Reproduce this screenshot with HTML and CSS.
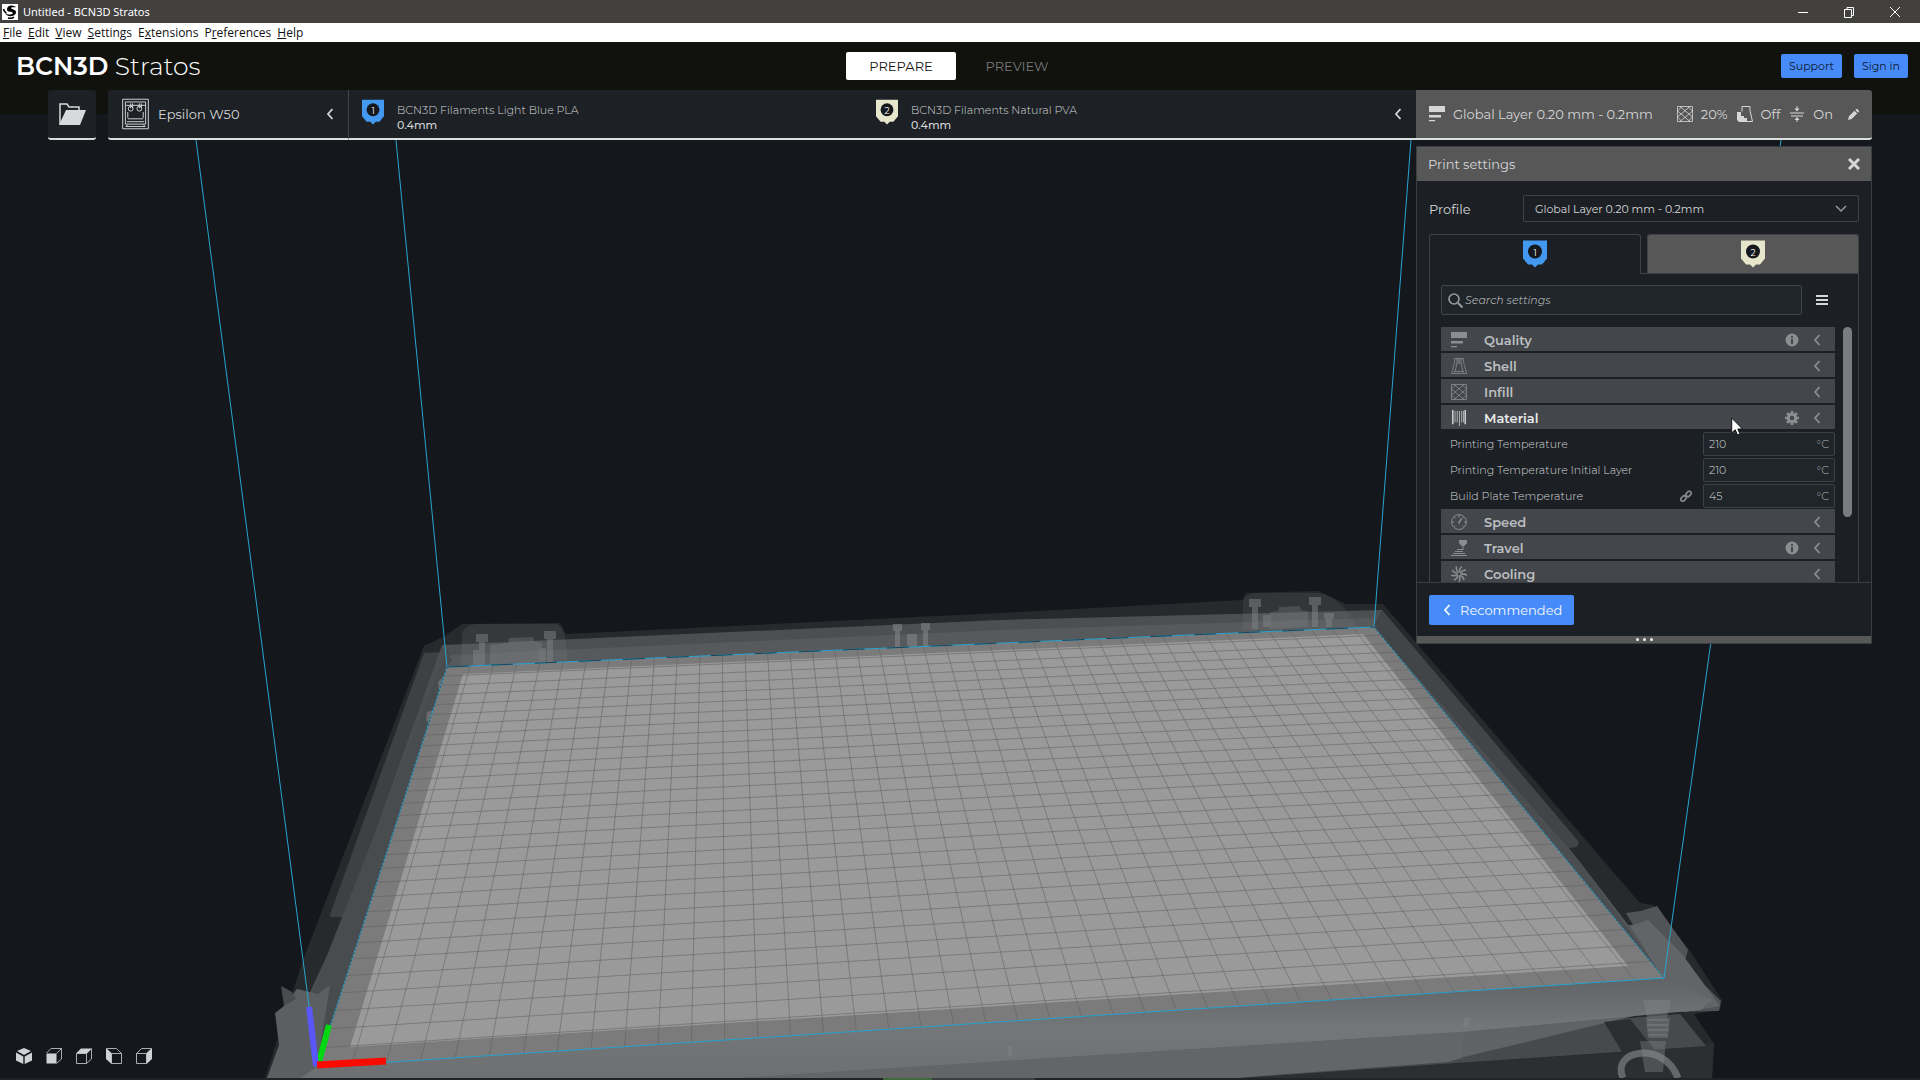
FILE: index.html
```html
<!DOCTYPE html>
<html lang="en">
<head>
  <meta charset="UTF-8">
  <title>Untitled - BCN3D Stratos</title>
  <link rel="stylesheet" href="styles.css">
</head>
<body>
  <!-- shared icons -->
  <svg class="defs" aria-hidden="true">
    <symbol id="chevron" viewBox="0 0 8 12"><path d="M6.5 1 2 6l4.500 5" fill="none" stroke="currentColor" stroke-width="1.800"/></symbol>
    <symbol id="layers" viewBox="0 0 16 16"><path d="M0 0h16v6H0zM0 9h12v2.500H0zM0 14h6v1.200H0z" fill="currentColor"/></symbol>
    <symbol id="infill" viewBox="0 0 16 16"><path d="M.5.5h15v15H.5zM5 .5l-4.500 4.500M11 .5l4.500 4.500M.5 11 5 15.500M15.500 11 11 15.500M3 .5l12.500 10.500M13 .5.5 11M.5 5 13 15.500M15.500 5 3 15.500" fill="none" stroke="currentColor" stroke-width=".8"/></symbol>
    <symbol id="shell" viewBox="0 0 16 16"><path d="M3.500.5h9q-.5 4 1.200 8l2 7H.5l2-7q1.700-4 1-8zM6 .5q.3 5-1 9l-1.500 5M10 .5q-.3 5 1 9l1.500 5M7.200 1v5M8.800 1v5M3.500 13.500h9" fill="none" stroke="currentColor" stroke-width=".8"/></symbol>
    <symbol id="material" viewBox="0 0 16 18"><path d="M1 0v16M15 0v16" stroke="currentColor" stroke-width="1.800"/><path d="M3.500 1v13M6 1v13M8.500 1v17M11 1v13M13 1v13" stroke="currentColor" stroke-width=".9"/></symbol>
    <symbol id="speed" viewBox="0 0 16 16"><g fill="none" stroke="currentColor"><circle cx="8" cy="8" r="7.400" stroke-width="1"/><path d="M8 1v2.500M1 8h2M13 8h2M3.200 3.200l1.300 1.300M12.800 3.200l-1.300 1.300M3.500 12.500l1-1M12.500 12.500l-1-1"/><path d="M7.500 9.500 10.500 4.500" stroke-width="1.500"/></g></symbol>
    <symbol id="travel" viewBox="0 0 16 16"><path d="M8 0h8v3l-2.500 3h-3L8 3z" fill="currentColor"/><path d="M12 6v4M6 9.500h6M4 11.500h8M2 13.500h12M0 15.500h16" stroke="currentColor" fill="none"/></symbol>
    <symbol id="cooling" viewBox="0 0 16 16"><g fill="none" stroke="currentColor" stroke-width="1.500"><path id="blade" d="M8.500 6.500Q8 3 10.800.5"/><use href="#blade" transform="rotate(40 8 8)"/><use href="#blade" transform="rotate(80 8 8)"/><use href="#blade" transform="rotate(120 8 8)"/><use href="#blade" transform="rotate(160 8 8)"/><use href="#blade" transform="rotate(200 8 8)"/><use href="#blade" transform="rotate(240 8 8)"/><use href="#blade" transform="rotate(280 8 8)"/><use href="#blade" transform="rotate(320 8 8)"/></g></symbol>
    <symbol id="info" viewBox="0 0 14 14"><circle cx="7" cy="7" r="6.500" fill="currentColor"/><path d="M7 3v1.800M7 5.800v5.200" stroke="#43464a" stroke-width="2"/></symbol>
    <symbol id="gear" viewBox="0 0 16 16"><circle cx="8" cy="8" r="4.300" fill="none" stroke="currentColor" stroke-width="3.400"/><path d="M8 0v3M8 13v3M0 8h3M13 8h3M2.400 2.400l2 2M11.600 11.600l2 2M13.600 2.400l-2 2M4.400 11.600l-2 2" stroke="currentColor" stroke-width="3"/></symbol>
    <symbol id="extruder" viewBox="0 0 24 27"><path d="M0 0h24v18l-5 6h-4l-3 3-3-3H5l-5-6z" fill="currentColor"/><circle cx="12" cy="11" r="7" fill="#15191d"/></symbol>
  </svg>

  <div class="app">
    <svg class="scene" id="scene" viewBox="0 0 1920 1080" preserveAspectRatio="xMidYMax slice" aria-hidden="true">
      <defs>
        <linearGradient id="apron" x1="0" y1="0" x2="0" y2="1">
          <stop offset="0" stop-color="#606466"/>
          <stop offset=".5" stop-color="#747779"/>
          <stop offset="1" stop-color="#6d6f71"/>
        </linearGradient>
      </defs>
      <!-- printer body -->
      <path fill="#272a2c" d="M424 646 445 636 462 624 560 623 566 634 1000 613 1242 600 1246 593 1318 591 1346 604 1383 604 1640 903 1653 905 1688 948 1722 1000 1720 1010 1694 1014 1714 1044 1712 1078H265L303 960z"/>
      <path fill="#3e4143" d="M424 653 444 652 346 917 330 917 331 912z"/>
      <path fill="#424547" d="M1383 611 1579 842 1577 847 1569 848 1374 627z"/>
      <path fill="#4c4f51" d="M442 645 1000 620 1383 610 1374 627 447 667 317 1067 300 1078H270L345 917z"/>
      <path fill="#575a5c" d="M447 655 1000 630 1374 618 1374 627 447 667z"/>
      <path fill="#494c4e" d="M447 650 452 660 447 667 317 1067 295 1078 282 1070z"/>
      <path fill="#4b4e50" d="M1374 627 1569 848 1628 925 1664 978z"/>
      <path fill="#535658" d="M1569 848 1628 925 1652 925 1700 1000 1664 978z"/>
      <!-- left foot -->
      <path fill="#5c5f61" d="M297 989 318 994 330 985 317 1067 300 1078H267L279 1045 275 1013 284 1006z"/>
      <path fill="#4a4d4f" d="M281 986 292 992 296 999 284 1006z"/>
      <!-- right foot -->
      <path fill="#515456" d="M1626 913 1641 911 1657 906 1688 950 1684 965 1721 1001 1719 1011 1672 1012 1664 978z"/>
      <path fill="#626567" d="M1630 926 1648 920 1682 954 1720 1006 1685 1012z"/>
      <!-- front -->
      <path fill="#2c2f31" d="M1240 1078 1630 1052 1714 1043 1712 1078z"/>
      <path fill="#474a4c" d="M1460 1035 1605 1020 1680 1014 1706 1046 1240 1078H1200z"/>
      <path fill="#606264" d="M300 1078 317 1067 1700 1000 1460 1058 1230 1078z"/>
      <path fill="url(#apron)" d="M317 1067 1664 978 1712 1000 1700 1010 1460 1032 740 1078H300z"/>
      <path fill="#636566" d="M740 1078 1464 1032 1462 1058 1448 1062 1235 1078z"/>
      <path fill="#2b2e30" d="M1604 1022 1630 1019 1655 1050 1622 1052z"/>
      <path fill="#7f8284" opacity=".5" d="M1464 1018h6l-2 9h-5zM1008 1046h4v10h-4z"/>
      <!-- levelling screws -->
      <g fill="#85888a" opacity=".55">
        <path d="M476 634h12v8h-3v23h-6v-23h-3zM544 631h12v8h-3v24h-6v-24h-3zM473 650h8v15h-8zM538 648h8v15h-8zM893 624h9v7h-2v16h-5v-16h-2zM921 623h9v7h-2v16h-5v-16h-2zM907 634h10v12h-10zM1249 599h12v8h-3v22h-6v-22h-3zM1309 597h12v8h-3v22h-6v-22h-3zM1324 613h10v6h-2v8h-6v-8h-2zM1263 615h8v12h-8z"/>
        <path d="M490 645 508 643 509 638 533 637 534 641 542 643V663L490 665z" opacity=".7"/>
        <path d="M1270 612 1278 611 1279 607 1300 606 1301 610 1308 611V627L1270 629z" opacity=".6"/>
        <path d="M462 634q2-9 14-10h80q10 2 11 30v6l-106 5z" opacity=".3"/>
        <path d="M1243 602q1-8 12-9h60q16 0 30 16l12 18-114 4z" opacity=".25"/>
        <path d="M438 682 446 674 440 700zM427 712l7-2-3 12-5-1z"/>
        <path d="M1643 1000h28l-4 18h-20zM1646 1018h24l-2 20h-20zM1640 1041h26l-3 31h-18z" opacity=".7"/>
      </g>
      <g fill="none" stroke="#8b8e90">
        <path d="M1648 1020h20M1647 1025h21M1648 1030h20M1649 1035h18" opacity=".7"/>
        <path d="M1623 1078C1610 1050 1664 1040 1678 1078" stroke-width="7" opacity=".6"/>
      </g>
      <path class="bed" d="M447 667 1374 627 1664 978 317 1067z"/>
      <path class="plate" d="M463 674 1363 634 1628 966 350 1047z"/>
      <path id="grid" class="grid"/>
      <path class="volume" d="M196 140 317 1067 1664 978 1781 140M396 140 447 667 1374 627 1411 140M1374 627 1664 978M447 667 317 1067"/>
      <path class="volume back" d="M447 667 1374 627"/>
      <path class="volume dots" d="M447 667 317 1067M1374 627 1664 978"/>
      <!-- axes -->
      <path stroke="#00d812" stroke-width="6" d="M319 1062 329 1025"/>
      <path stroke="#5a57fa" stroke-width="6" d="M316 1066 309 1007"/>
      <path stroke="#fa0b00" stroke-width="7" d="M317 1065 386 1061"/>
      <path fill="#212425" d="M0 1078H1920V1080H0z"/>
      <path fill="#3c6a3e" d="M883 1078h49v2h-49z"/>
      <path fill="#3b3d3e" d="M932 1078h103v2H932z"/>
    </svg>

    <header class="titlebar">
      <svg class="app-icon" viewBox="0 0 16 16"><path fill="#fff" d="M0 0h16v16H0z"/><path d="M13 2.500C9 .5 5 2 5 5.500c0 3.500 5 1.500 6 3.500-1 2-6 2-8 0 1 4 9 4.500 11 0 .5-4-4-3-5-5 .5-1.500 2.500-.5 5-1z"/><path d="M1.500 5q1 3.500 3 4M6 14q4 1 6-1" fill="none" stroke="#000" stroke-width="1.500"/></svg>
      <span>Untitled - BCN3D Stratos</span>
      <div class="window-buttons">
        <button aria-label="Minimize"><svg viewBox="0 0 12 12"><path d="M1 6.500h10"/></svg></button>
        <button aria-label="Restore"><svg viewBox="0 0 12 12"><path d="M1.500 3.500h7v8h-7zM4 3.500v-2h6.500v8h-2"/></svg></button>
        <button aria-label="Close"><svg viewBox="0 0 12 12"><path d="m1 1 10 10M11 1 1 11"/></svg></button>
      </div>
    </header>

    <nav class="menubar">
      <a href="#"><u>F</u>ile</a>
      <a href="#"><u>E</u>dit</a>
      <a href="#"><u>V</u>iew</a>
      <a href="#"><u>S</u>ettings</a>
      <a href="#">E<u>x</u>tensions</a>
      <a href="#">P<u>r</u>eferences</a>
      <a href="#"><u>H</u>elp</a>
    </nav>

    <div class="topbar">
      <h1 class="logo"><strong>BCN3D</strong> Stratos</h1>
      <div class="stages">
        <button class="stage-tab active">PREPARE</button>
        <button class="stage-tab">PREVIEW</button>
      </div>
      <div class="account">
        <button class="btn">Support</button>
        <button class="btn">Sign in</button>
      </div>
    </div>

    <main class="stage">
      <div class="toolbar">
        <button class="open" aria-label="Open file">
          <svg viewBox="0 0 28 24"><path d="M2 22V2h7l2 3h10v3" fill="none" stroke="#d8d9da" stroke-width="1.500"/><path d="M8 8h20l-6 15H1z" fill="#d8d9da"/></svg>
        </button>
        <div class="toolbar-main">
          <button class="printer">
            <svg class="printer-icon" viewBox="0 0 28 32" fill="none" stroke="currentColor"><path d="M.7.7h26.600v30.600H.700zM3.500 3.500h21v23h-21zM4 7h20M9 5v5M18 5v5M11 5v5M20 5v5M6 20v-6M22 20v-6M6 21h16M5 24h18M6 27l-2 2h20l-2-2"/><circle cx="9" cy="10.500" r="2.500"/><circle cx="18" cy="10.500" r="2.500"/></svg>
            <span>Epsilon W50</span>
            <svg class="chevron"><use href="#chevron"/></svg>
          </button>
          <button class="materials">
            <span class="material">
              <span class="extruder blue"><svg><use href="#extruder"/></svg><b>1</b></span>
              <span>BCN3D Filaments Light Blue PLA<br><strong>0.4mm</strong></span>
            </span>
            <span class="material">
              <span class="extruder cream"><svg><use href="#extruder"/></svg><b>2</b></span>
              <span>BCN3D Filaments Natural PVA<br><strong>0.4mm</strong></span>
            </span>
            <svg class="chevron"><use href="#chevron"/></svg>
          </button>
          <button class="summary">
            <svg class="icon"><use href="#layers"/></svg>
            <span class="profile-name">Global Layer 0.20 mm - 0.2mm</span>
            <svg class="icon"><use href="#infill"/></svg>
            <span class="value">20%</span>
            <svg class="icon" viewBox="0 0 16 16"><path d="M5 .5h8v4l2.500 11H9M5 .5v5" fill="none" stroke="currentColor"/><path d="M0 6h4v4h3v2h3v4H2l-2-2z" fill="currentColor"/></svg>
            <span class="value">Off</span>
            <svg class="icon" viewBox="0 0 16 16"><path d="M1 7h14M2 10h12M8 0v4M8 12v4" fill="none" stroke="currentColor"/><path d="M5.500 2.500h5L8 5.500zM5.500 14h5L8 11z" fill="currentColor"/></svg>
            <span class="value">On</span>
            <svg class="pencil" viewBox="0 0 12 12"><path d="m0 12 1-4 6-6 3 3-6 6zM8 1l1-1h1l2 2v1l-1 1z" fill="currentColor"/></svg>
          </button>
        </div>
      </div>

      <section class="panel">
        <div class="panel-head">
          <h2>Print settings</h2>
          <button aria-label="Close"><svg viewBox="0 0 12 12"><path d="m1 1 10 10M11 1 1 11" stroke="currentColor" stroke-width="3"/></svg></button>
        </div>
        <div class="panel-body">
          <div class="profile">
            <label for="profile">Profile</label>
            <div class="select">
              <select id="profile"><option>Global Layer 0.20 mm - 0.2mm</option></select>
              <svg viewBox="0 0 12 8"><path d="m1 1 5 5 5-5" fill="none" stroke="currentColor" stroke-width="1.500"/></svg>
            </div>
          </div>
          <div class="tabs">
            <button class="tab active"><span class="extruder blue"><svg><use href="#extruder"/></svg><b>1</b></span></button>
            <button class="tab"><span class="extruder cream"><svg><use href="#extruder"/></svg><b>2</b></span></button>
          </div>
          <div class="tab-content">
            <div class="search-row">
              <div class="search">
                <svg viewBox="0 0 15 15"><circle cx="6" cy="6" r="5" fill="none" stroke="currentColor" stroke-width="1.600"/><path d="m10 10 4.500 4.500" stroke="currentColor" stroke-width="2"/></svg>
                <input type="text" placeholder="Search settings" aria-label="Search settings">
              </div>
              <button class="hamburger" aria-label="Setting visibility"><svg viewBox="0 0 12 10"><path d="M0 1h12M0 5h12M0 9h12" stroke="currentColor" stroke-width="2"/></svg></button>
            </div>
            <div class="list">
              <div class="categories">
                <button class="category"><svg class="icon"><use href="#layers"/></svg><span>Quality</span><svg class="badge"><use href="#info"/></svg><svg class="chevron"><use href="#chevron"/></svg></button>
                <button class="category"><svg class="icon"><use href="#shell"/></svg><span>Shell</span><svg class="chevron"><use href="#chevron"/></svg></button>
                <button class="category"><svg class="icon"><use href="#infill"/></svg><span>Infill</span><svg class="chevron"><use href="#chevron"/></svg></button>
                <button class="category hover"><svg class="icon"><use href="#material"/></svg><span>Material</span><svg class="badge"><use href="#gear"/></svg><svg class="chevron"><use href="#chevron"/></svg></button>
                <div class="setting">
                  <label for="temp">Printing Temperature</label>
                  <div class="field"><input id="temp" type="text" value="210"><span>°C</span></div>
                </div>
                <div class="setting">
                  <label for="temp-initial">Printing Temperature Initial Layer</label>
                  <div class="field"><input id="temp-initial" type="text" value="210"><span>°C</span></div>
                </div>
                <div class="setting">
                  <label for="temp-bed">Build Plate Temperature</label>
                  <svg class="link" viewBox="0 0 12 12" fill="none" stroke="currentColor" stroke-width="1.700"><rect x="5.500" y="2" width="6" height="4" rx="2" transform="rotate(-45 8.500 4)"/><rect x=".5" y="6.500" width="6" height="4" rx="2" transform="rotate(-45 3.500 8.500)"/><path d="m5 7 2-2"/></svg>
                  <div class="field"><input id="temp-bed" type="text" value="45"><span>°C</span></div>
                </div>
                <button class="category"><svg class="icon"><use href="#speed"/></svg><span>Speed</span><svg class="chevron"><use href="#chevron"/></svg></button>
                <button class="category"><svg class="icon"><use href="#travel"/></svg><span>Travel</span><svg class="badge"><use href="#info"/></svg><svg class="chevron"><use href="#chevron"/></svg></button>
                <button class="category"><svg class="icon"><use href="#cooling"/></svg><span>Cooling</span><svg class="chevron"><use href="#chevron"/></svg></button>
              </div>
              <div class="scrollbar"></div>
            </div>
          </div>
        </div>
        <div class="panel-foot">
          <button class="recommended"><svg class="chevron"><use href="#chevron"/></svg>Recommended</button>
        </div>
        <div class="grip"><i></i><i></i><i></i></div>
        <svg class="cursor" viewBox="0 0 12 19"><path d="M.7 1v15l3.500-3.300L6.500 18l2.500-1-2.200-5h4.700z" fill="#fff" stroke="#111"/></svg>
      </section>

      <div class="views">
        <button aria-label="3D view"><svg viewBox="0 0 16 16"><path d="m8 0 7 3-7 4-7-4zM0 4.500l7.300 4V16L0 12.500zM16 4.500l-7.300 4V16l7.300-3.500z" fill="currentColor"/></svg></button>
        <button aria-label="Front view"><svg viewBox="0 0 16 16"><path d="M.5 5.500h10v10H.500z" fill="currentColor"/><path d="m.5 5 4.500-4.500h10.500v10.500l-5 4.500M10.500 5.500l5-5" fill="none" stroke="currentColor" stroke-width=".8"/></svg></button>
        <button aria-label="Top view"><svg viewBox="0 0 16 16"><path d="M0 5.500 5 .5h11l-5 5z" fill="currentColor"/><path d="M.5 5.500h10v10H.500zM15.500.5v10.500l-5 4.500" fill="none" stroke="currentColor" stroke-width=".8"/></svg></button>
        <button aria-label="Left view"><svg viewBox="0 0 16 16"><path d="m0 0 5.500 5v11L0 11z" fill="currentColor"/><path d="M5.500 5.500h10v10h-10zM.5.5h10l5 5" fill="none" stroke="currentColor" stroke-width=".8"/></svg></button>
        <button aria-label="Right view"><svg viewBox="0 0 16 16"><path d="m16 0-5.500 5v11l5.500-5z" fill="currentColor"/><path d="M.5 5.500h10v10H.500zM.5 5.500l5-5h10" fill="none" stroke="currentColor" stroke-width=".8"/></svg></button>
      </div>
    </main>
  </div>
  <script src="scene.js"></script>
</body>
</html>
```
FILE: styles.css
```css
* {
  box-sizing: border-box;
}

body {
  margin: 0;
  background: #14181c;
  color: #d4d6d8;
  font-family: Montserrat, Inter, sans-serif;
  font-size: 13px;
  font-weight: 400;
}

button, input, select {
  font: inherit;
  color: inherit;
  background: none;
  border: none;
  padding: 0;
  margin: 0;
}

svg {
  display: block;
  flex: none;
}

.defs {
  position: absolute;
  width: 0;
  height: 0;
}

.app {
  position: relative;
  display: flex;
  flex-direction: column;
  min-height: 100vh;
  overflow: hidden;
}

.titlebar, .menubar, .topbar, .stage {
  position: relative;
}

/* 3D view */
.scene {
  position: absolute;
  width: 100%;
  height: 100%;
}

.bed { fill: #7b7b7b; }
.plate { fill: #9a9a9a; }

.grid {
  fill: none;
  stroke: #606163;
  stroke-opacity: 0.55;
}

.volume {
  fill: none;
  stroke: #28a4d2;
}

.volume.back {
  stroke: #15465a;
  stroke-dasharray: 22;
}

.volume.dots {
  stroke: #3a5661;
  stroke-dasharray: 2;
}

/* window chrome */
.titlebar {
  display: flex;
  align-items: center;
  height: 23px;
  padding: 0 2px;
  gap: 5px;
  background: #42413f;
  color: #fff;
  font: 11px "Noto Sans", sans-serif;
}

.app-icon {
  width: 16px;
  height: 16px;
}

.window-buttons {
  display: flex;
  margin-left: auto;
}

.window-buttons button {
  width: 46px;
  padding-left: 17px;
}

.window-buttons svg {
  width: 12px;
  height: 12px;
  fill: none;
  stroke: #fff;
}

.menubar {
  display: flex;
  height: 19px;
  padding: 0 3px;
  gap: 6px;
  background: #fff;
  font: 12px/19px "Open Sans", sans-serif;
}

.menubar a {
  color: #111;
  text-decoration: none;
}

.topbar {
  display: grid;
  grid-template-columns: 1fr auto 1fr;
  align-items: center;
  height: 48px;
  padding: 0 12px 0 16px;
  background: #11120e;
}

.logo {
  margin: 0;
  color: #fff;
  font-size: 25px;
  font-weight: 300;
}

.logo strong {
  font-weight: 600;
}

.stages {
  display: flex;
  padding-right: 6px;
}

.stage-tab {
  height: 28px;
  width: 110px;
  border-radius: 2px;
  color: #77787a;
}

.stage-tab + .stage-tab {
  margin-left: 6px;
}

.stage-tab.active {
  background: #fff;
  color: #111;
}

.account {
  display: flex;
  justify-content: flex-end;
  gap: 12px;
}

.btn {
  height: 24px;
  padding: 0 8px;
  border-radius: 2px;
  background: #478bf9;
  color: #0d1a30;
  font-size: 11px;
}

/* main area */
.stage {
  flex: 1;
  display: flex;
  flex-direction: column;
  padding: 0 48px 16px;
  background: linear-gradient(#11120e 24px, transparent 24px);
}

.toolbar {
  display: flex;
  gap: 12px;
  height: 50px;
}

.toolbar-main {
  flex: 1;
  display: flex;
}

.open, .printer, .materials, .summary {
  display: flex;
  align-items: center;
  background: #1d2125;
  border-bottom: 2px solid #dcdedd;
  text-align: left;
}

.open {
  width: 48px;
  justify-content: center;
  border-radius: 3px;
}

.open svg {
  width: 28px;
  height: 24px;
}

.printer {
  width: 240px;
  padding: 0 14px;
  gap: 9px;
  border-radius: 3px 0 0 3px;
}

.printer-icon {
  width: 27px;
  height: 32px;
}

.chevron {
  width: 8px;
  height: 12px;
}

.printer .chevron, .materials .chevron {
  margin-left: auto;
}

.materials {
  flex: 1;
  padding: 0 14px 0 13px;
  border-left: 1px solid #43464a;
  font-size: 11px;
  font-weight: 300;
  line-height: 15px;
}

.material {
  display: flex;
  flex: 0 0 514px;
  gap: 13px;
}

.material > span:last-child {
  margin: 4px 0 -4px;
}

.material strong {
  font-weight: 500;
}

.extruder {
  position: relative;
  width: 22px;
  height: 26px;
}

.extruder svg {
  width: 100%;
  height: 100%;
}

.extruder.blue { color: #4398ef; }
.extruder.cream { color: #e6e6cb; }

.extruder b {
  position: absolute;
  inset: 0 0 4px;
  display: flex;
  align-items: center;
  justify-content: center;
  color: #fff;
  font-size: 9px;
  font-weight: 400;
}

.summary {
  width: 456px;
  padding: 0 13px;
  background: #575757;
  border-radius: 0 3px 3px 0;
}

.icon {
  width: 16px;
  height: 16px;
}

.profile-name {
  flex: 1;
  margin-left: 8px;
}

.value {
  margin: 0 9px 0 8px;
}

.value + .pencil {
  margin-left: 6px;
}

.pencil {
  width: 11px;
  height: 11px;
}

/* print settings panel */
.panel {
  position: relative;
  align-self: flex-end;
  width: 456px;
  margin-top: 6px;
  border: 1px solid #3c3f42;
  background: #1c2024;
}

.panel-head {
  display: flex;
  align-items: center;
  justify-content: space-between;
  height: 34px;
  padding: 0 11px;
  background: #575757;
}

.panel-head h2 {
  margin: 0;
  font-size: 13px;
  font-weight: 400;
}

.panel-head svg {
  width: 12px;
  height: 12px;
}

.panel-body {
  padding: 14px 12px 0;
  border-bottom: 1px solid #3c3f42;
}

.profile {
  display: flex;
  align-items: center;
  margin-bottom: 12px;
}

.profile label {
  width: 94px;
}

.select {
  position: relative;
  flex: 1;
}

.select select {
  width: 100%;
  height: 27px;
  padding: 0 11px;
  border: 1px solid #3f4346;
  border-radius: 2px;
  appearance: none;
  font-size: 11px;
}

.select svg {
  position: absolute;
  right: 12px;
  top: 10px;
  width: 12px;
  height: 8px;
  color: #96999b;
}

.tabs {
  display: flex;
  gap: 6px;
}

.tab {
  flex: 1;
  display: flex;
  justify-content: center;
  height: 40px;
  padding-top: 5px;
  border: 1px solid #3f4346;
  border-radius: 3px 3px 0 0;
  background: #575757;
}

.tab.active {
  z-index: 1;
  border-bottom-color: #1c2024;
  background: #1c2024;
}

.tab .extruder {
  width: 24px;
  height: 28px;
}

.tab-content {
  margin-top: -1px;
  padding: 11px 6px 0 11px;
  border: 1px solid #3f4346;
  border-width: 1px 1px 0;
}

.search-row {
  display: flex;
  align-items: center;
  gap: 14px;
  margin-bottom: 12px;
}

.search {
  flex: 0 0 361px;
  display: flex;
  align-items: center;
  gap: 2px;
  height: 30px;
  padding: 0 6px;
  border: 1px solid #3c444c;
  border-radius: 2px;
  background: #20252a;
}

.search svg {
  width: 15px;
  height: 15px;
  color: #999c9f;
}

.search input {
  flex: 1;
  font-size: 11px;
  font-style: italic;
}

.search input::placeholder {
  color: #a4a7a9;
}

.hamburger svg {
  width: 12px;
  height: 10px;
}

.list {
  display: flex;
  gap: 8px;
  height: 255px;
  overflow: hidden;
}

.categories {
  flex: 0 0 394px;
}

.category {
  display: flex;
  align-items: center;
  width: 100%;
  height: 24px;
  margin-bottom: 2px;
  padding: 1px 14px 0 10px;
  background: #43464a;
  color: #8b8e91;
  font-weight: 600;
  text-align: left;
}

.category span {
  flex: 1;
  margin-left: 17px;
  color: #bcbfc1;
}

.category.hover span {
  color: #e8eaeb;
}

.category.hover .icon {
  color: #c9cbcd;
}

.badge {
  width: 16px;
  height: 14px;
  margin-right: 13px;
}

.setting {
  display: flex;
  align-items: center;
  height: 26px;
  padding-left: 9px;
  font-size: 11px;
  font-weight: 300;
}

.setting label {
  flex: 1;
}

.link {
  width: 12px;
  height: 12px;
  margin-right: 11px;
  color: #85888b;
}

.field {
  display: flex;
  align-items: center;
  width: 132px;
  height: 24px;
  padding: 0 5px;
  border: 1px solid #37424a;
  border-radius: 2px;
  background: #20252a;
}

.field input {
  width: 0;
  flex: 1;
}

.field span {
  color: #b4b7b9;
}

.scrollbar {
  flex: none;
  width: 9px;
  height: 190px;
  border-radius: 5px;
  background: #7a7d80;
}

.panel-foot {
  padding: 12px 12px 11px;
}

.recommended {
  display: flex;
  align-items: center;
  gap: 9px;
  width: 145px;
  height: 30px;
  padding-left: 14px;
  border-radius: 2px;
  background: #478bf9;
  color: #f4f8ff;
}

.grip {
  display: flex;
  justify-content: center;
  align-items: center;
  gap: 4px;
  height: 7px;
  background: #575757;
}

.grip i {
  width: 3px;
  height: 3px;
  border-radius: 50%;
  background: #f0f0f0;
}

.cursor {
  position: absolute;
  top: 270px;
  right: 128px;
  width: 12px;
  height: 19px;
}

/* camera buttons */
.views {
  display: flex;
  gap: 14px;
  margin: auto 0 0 -32px;
  color: #d0d2d6;
}

.views svg {
  width: 16px;
  height: 16px;
}
```
FILE: scene.js
```javascript
// corners of the build plate on screen: back left, back right, front right, front left
const corners = [[447, 667], [1374, 627], [1664, 978], [317, 1067]];
const columns = 42;
const rows = 30;

// projective map from the unit square to the four corners
const [[x0, y0], [x1, y1], [x2, y2], [x3, y3]] = corners;
const dx1 = x1 - x2, dx2 = x3 - x2, sx = x0 - x1 + x2 - x3;
const dy1 = y1 - y2, dy2 = y3 - y2, sy = y0 - y1 + y2 - y3;
const det = dx1 * dy2 - dx2 * dy1;
const g = (sx * dy2 - dx2 * sy) / det;
const h = (dx1 * sy - sx * dy1) / det;

function project(u, v) {
  const w = g * u + h * v + 1;
  const x = ((x1 - x0 + g * x1) * u + (x3 - x0 + h * x3) * v + x0) / w;
  const y = ((y1 - y0 + g * y1) * u + (y3 - y0 + h * y3) * v + y0) / w;
  return x.toFixed(1) + " " + y.toFixed(1);
}

let d = "";
for (let i = 1; i < columns; i++) {
  d += `M${project(i / columns, 0)}L${project(i / columns, 1)}`;
}
for (let j = 1; j < rows; j++) {
  d += `M${project(0, j / rows)}L${project(1, j / rows)}`;
}
document.getElementById("grid").setAttribute("d", d);
```
